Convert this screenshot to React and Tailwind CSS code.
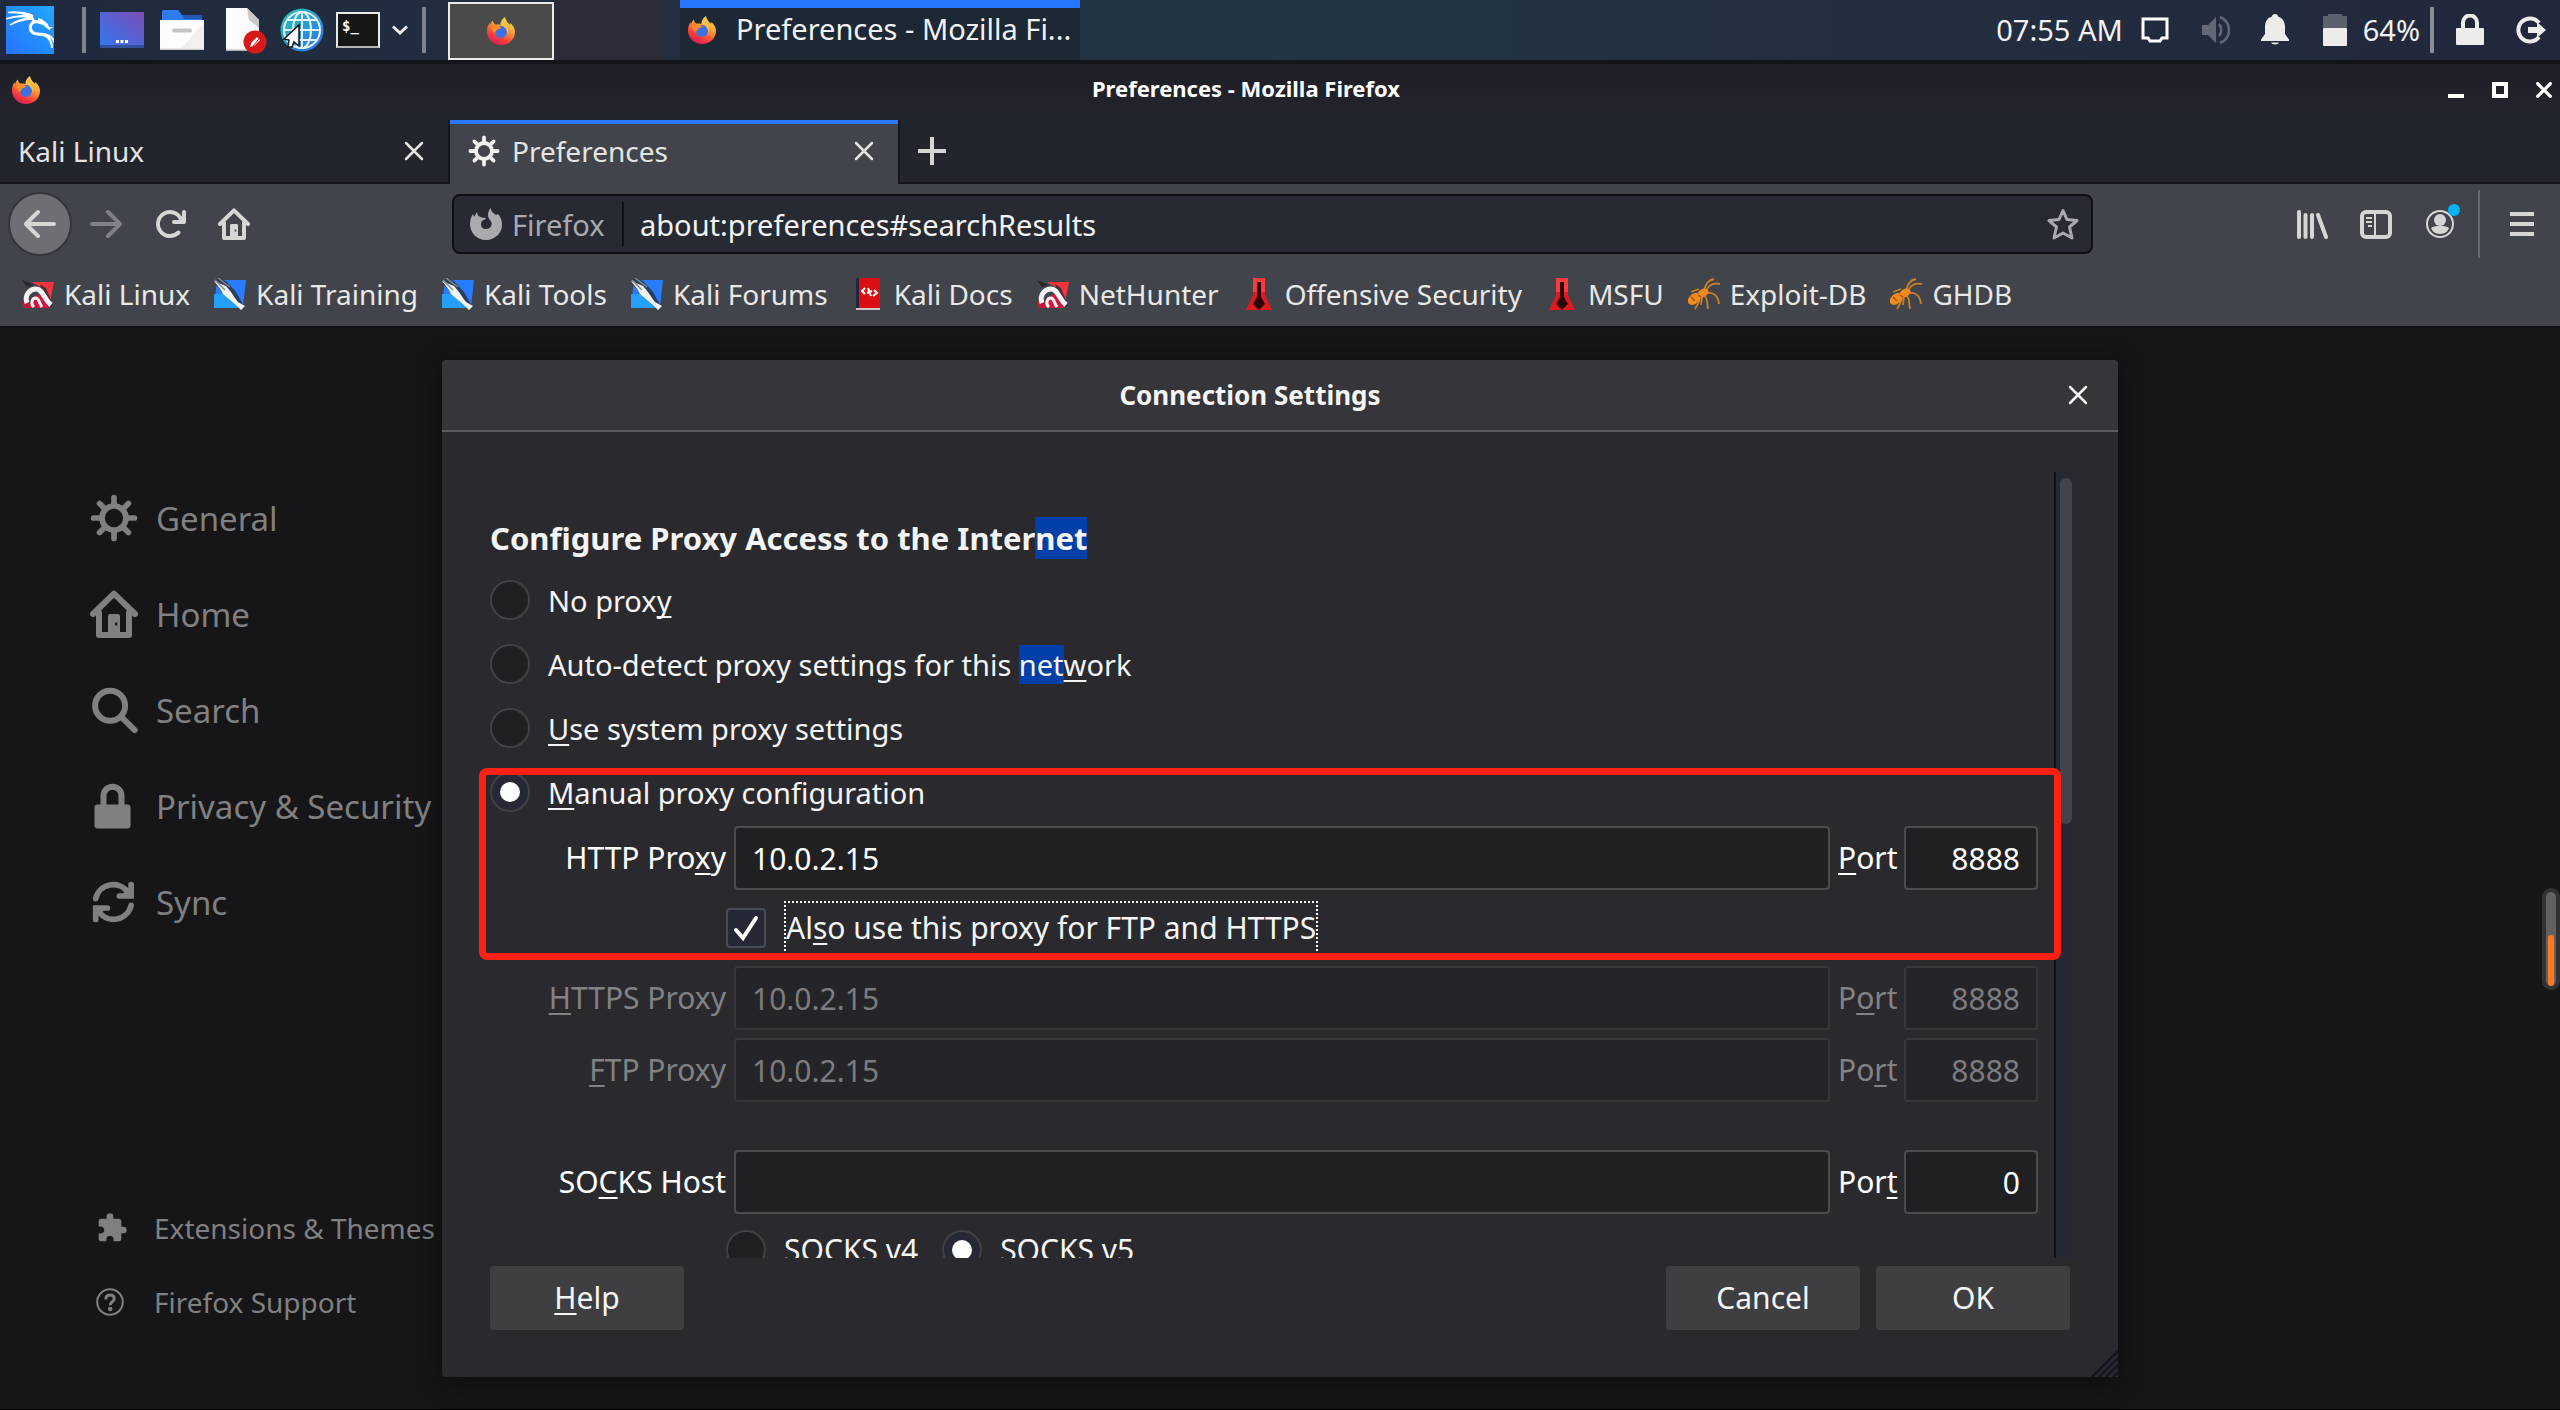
import React from "react";
import { SiKalilinux } from "react-icons/si";
import { MdExtension } from "react-icons/md";

/* ---------- icons ---------- */

function FirefoxLogo({ id }) {
  return (
    <svg viewBox="0 0 28 28" className="size-7 shrink-0" aria-hidden="true">
      <defs>
        <linearGradient id={id} x1="0.8" y1="0.05" x2="0.3" y2="1">
          <stop offset="0" stopColor="#f7e04d" />
          <stop offset="0.4" stopColor="#f79a33" />
          <stop offset="0.75" stopColor="#fa3b3b" />
          <stop offset="1" stopColor="#d81b5c" />
        </linearGradient>
      </defs>
      <path
        fill={`url(#${id})`}
        d="M14 28C6 28 0 22 0 14.500C0 11 1 8 2.500 6L3 8.500C3.500 6 4.800 4.500 6 3.600C6 5.500 7 7 8.500 7.600C10.500 7.600 12 7.500 13.300 8C13.500 5 14.500 2 18 0C18.500 3 20 4 21 6C22 6.500 22.500 7 23 8L23.500 6C26.500 9 28 12 28 15C28 22 22 28 14 28Z"
      />
      <circle cx="14" cy="15" r="6" fill="#3f6fe0" />
      <path fill="#fb8b2c" d="M4 10C7 8 11 8 14 10.500C13 12 11 12 10 12.500C9.500 14 8.500 15 8 16C6 15 4.500 13 4 10Z" />
      <path fill="#f7c04a" d="M14 8C18 9 21 13 20 17C21.500 15 21.500 11 19 8C17 6 16 4 17 2C14 4 13.500 6 14 8Z" />
    </svg>
  );
}

function FirefoxGlyph() {
  return (
    <svg viewBox="0 0 32 32" className="size-8 shrink-0" fill="#a9aaae" aria-hidden="true">
      <path d="M16 32C7 32 0 25 0 16C0 12 1 9 3 6L4 9L7 4C7 7 9 9 12 9.500L16 10C15 12 13 12 12 13C11 14 11.500 15 11 16C11 19 13 21 16 21C20 21 22 18 21.500 15C21 12 18 11 18 7C18 4 19 2 20.500 0C21 4 24 5 26 7L28 6C31 9 32 13 32 17C32 25 25 32 16 32Z" />
    </svg>
  );
}

function Gear({ className }) {
  return (
    <svg viewBox="0 0 16 16" className={className} fill="none" stroke="currentColor" strokeWidth="1.900" strokeLinecap="round" aria-hidden="true">
      <circle cx="8" cy="8" r="4" />
      <path d="M8 1.200V3.500M8 12.500V14.800M1.200 8H3.500M12.500 8H14.800M3.200 3.200L4.600 4.600M11.400 11.400L12.800 12.800M12.800 3.200L11.400 4.600M4.600 11.400L3.200 12.800" />
    </svg>
  );
}

function Home({ className }) {
  return (
    <svg viewBox="0 0 16 16" className={className} fill="none" stroke="currentColor" strokeWidth="2" strokeLinecap="round" strokeLinejoin="round" aria-hidden="true">
      <path d="M1 8L8 1.200L15 8M3 7.500V15H13V7.500" />
      <path fillRule="evenodd" stroke="none" fill="currentColor" d="M6.700 8H9.300A.700.700 0 0 1 10 8.700V15H6V8.700A.700.700 0 0 1 6.700 8ZM8.300 10.800V11.800H9.100V10.800Z" />
    </svg>
  );
}

function SearchIcon({ className }) {
  return (
    <svg viewBox="0 0 16 16" className={className} fill="none" stroke="currentColor" strokeWidth="2" strokeLinecap="round" aria-hidden="true">
      <circle cx="6.700" cy="6.600" r="5" />
      <path d="M10.500 10.400L14.900 14.700" />
    </svg>
  );
}

function LockIcon({ className }) {
  return (
    <svg viewBox="0 0 16 16" className={className} aria-hidden="true">
      <rect x="1.500" y="7.500" width="12" height="8" rx="1" fill="currentColor" />
      <path d="M4.500 8V4.600a3 3 0 0 1 6 0V8" fill="none" stroke="currentColor" strokeWidth="2" />
    </svg>
  );
}

function SyncIcon({ className }) {
  return (
    <svg viewBox="0 0 16 16" className={className} fill="none" stroke="currentColor" strokeWidth="1.900" strokeLinecap="round" aria-hidden="true">
      <path d="M1.900 6.900A6 6 0 0 1 12.600 4.700M13.700 9.100A6 6 0 0 1 3 11.300" />
      <path d="M14.400 1.800V6.400H9.700Z" fill="currentColor" stroke="none" />
      <path d="M13.700 2.200V6H9.800M1.900 13.800V10H5.800" />
      <path d="M1.200 14.200V9.600H5.900Z" fill="currentColor" stroke="none" />
    </svg>
  );
}

function HelpIcon({ className }) {
  return (
    <svg viewBox="0 0 28 28" className={className} fill="none" stroke="currentColor" strokeWidth="2" aria-hidden="true">
      <circle cx="14" cy="14" r="12.800" />
      <path strokeWidth="3" d="M9.800 11.500C9.800 8.500 11.600 7 14 7C16.500 7 18.200 8.500 18.200 10.700C18.200 13.500 14.200 14 14.200 17.200" />
      <circle cx="14.200" cy="21" r="1.300" fill="currentColor" />
    </svg>
  );
}

function Cross({ className, width = 2 }) {
  return (
    <svg viewBox="0 0 20 20" className={className} fill="none" stroke="currentColor" strokeWidth={width} strokeLinecap="round" aria-hidden="true">
      <path d="M2 2L18 18M18 2L2 18" />
    </svg>
  );
}

function KaliBlue() {
  return (
    <svg viewBox="0 0 32 32" className="size-8 shrink-0" aria-hidden="true">
      <path d="M3 2H32L29 29H0Z" fill="#2a7cff" />
      <path d="M0 16L15 16L29 30H0Z" fill="#24a0fb" />
      <path d="M4 0L12 3L22 14L31 30L20 22L9 14L1 6Z" fill="#2b2e33" opacity="0.800" />
      <path d="M0 3L12 8L17 14L21 20L24 24L31 28L27 32L22 27L16 22L9 16L7 12Z" fill="#f4f4f4" />
      <path d="M4 0L16 9M1 2L11 12" stroke="#8b8d90" strokeWidth="1.500" />
    </svg>
  );
}

function KaliRed() {
  return (
    <svg viewBox="0 0 32 32" className="size-8 shrink-0" aria-hidden="true">
      <path d="M10 4H32L28 24L20 10Z" fill="#f7333d" />
      <path d="M0 24L5 20L10 30H2Z" fill="#c81437" />
      <path d="M9 20L18 16L28 30H12Z" fill="#d5163c" />
      <path d="M0 2L12 7L5 9Z" fill="#24262b" />
      <path d="M18 6L24 10L31 27L28 30L23 22Z" fill="#2a2c31" opacity="0.800" />
      <path d="M5 25C2 17 8 11 14 11C21 11 21 20 29 27" fill="none" stroke="#f5f5f5" strokeWidth="5" />
      <path d="M12 29C8 26 10 20 14 20C17 20 17 25 20 29" fill="none" stroke="#f5f5f5" strokeWidth="3" />
    </svg>
  );
}

function DocsIcon() {
  return (
    <svg viewBox="0 0 32 32" className="size-8 shrink-0" aria-hidden="true">
      <rect x="4" y="0" width="24" height="30" fill="#d90f14" />
      <rect x="4" y="0" width="3" height="30" fill="#23243f" />
      <rect x="4" y="30" width="24" height="2" fill="#c9c9c9" />
      <path d="M13 10L10 13L13 16M22 12L25 15L21 18M15 15L20 13M16 10L19 18" stroke="#fff" strokeWidth="2" fill="none" />
    </svg>
  );
}

function TowerIcon() {
  return (
    <svg viewBox="0 0 32 32" className="size-8 shrink-0" aria-hidden="true">
      <path d="M10 0H22V17L29 32H3L10 17Z" fill="#e0191c" />
      <path d="M10 0H22V14H10Z" fill="#fb3b3b" />
      <path d="M14 4H18V19L22 26L16 32L10 26L14 19Z" fill="#2a0406" />
    </svg>
  );
}

function BugIcon() {
  return (
    <svg viewBox="0 0 32 32" className="size-8 shrink-0" aria-hidden="true">
      <g fill="none" stroke="#c8802a" strokeWidth="1.800">
        <path d="M16 12C18 6 20 2 26 1M19 11C22 6 26 5 32 6M20 15C26 14 30 18 31 26M17 18C20 22 19 27 20 31M12 19C12 24 9 27 7 31M11 11L3 14M14 19L13 27" />
      </g>
      <ellipse cx="6" cy="21" rx="7" ry="5" transform="rotate(-40 6 21)" fill="#f08a1d" />
      <ellipse cx="15" cy="15" rx="6" ry="4" transform="rotate(-30 15 15)" fill="#f08a1d" />
      <path d="M3 19L7 23M10 17L13 19" stroke="#a45408" strokeWidth="1.500" />
    </svg>
  );
}

/* ---------- desktop panel ---------- */

function Launchers() {
  return (
    <>
      <button aria-label="Applications" className="ml-1.5 size-12 bg-linear-to-tr from-[#2673ff] to-[#26a5ff]">
        <SiKalilinux className="size-12 text-white" stroke="#fff" strokeWidth="0.8" />
      </button>
      <div className="ml-7 h-[46px] w-1 bg-[#7e838d]" />
      <div className="ml-3.5 flex items-center gap-4">
        <button aria-label="Show desktop" className="block">
          <svg viewBox="0 0 44 36" className="h-9 w-11">
            <defs>
              <linearGradient id="desk" x1="0" y1="1" x2="1" y2="0">
                <stop offset="0" stopColor="#2f7bf0" />
                <stop offset="1" stopColor="#7c4bb8" />
              </linearGradient>
            </defs>
            <rect width="44" height="36" fill="url(#desk)" />
            <rect y="33" width="44" height="3" fill="#32509e" />
            <path d="M16 28h3v3h-3zM20.500 28h3v3h-3zM25 28h3v3h-3z" fill="#fff" />
          </svg>
        </button>
        <button aria-label="Files" className="block">
          <svg viewBox="0 0 44 40" className="h-10 w-11">
            <path d="M2 2a2 2 0 0 1 2-2H18L22 5H42V14H2Z" fill="#2f7bf0" />
            <path d="M22 5H42V9H24Z" fill="#2358b8" />
            <rect y="10" width="44" height="30" fill="#fdfdfd" />
            <path d="M44 12V38H22Z" fill="#f0f0f0" />
            <rect y="38.500" width="44" height="1.500" fill="#cfcfcf" />
            <rect x="12" y="18.500" width="20" height="4" rx="2" fill="#c4c4c4" />
          </svg>
        </button>
        <button aria-label="Text editor" className="block">
          <svg viewBox="0 0 48 48" className="size-12">
            <path d="M6 2H27L39 14V45H6Z" fill="#fbfbfb" />
            <path d="M27 2L39 14V22L29 14Z" fill="#c9c9c9" />
            <rect x="6" y="43.500" width="33" height="1.500" fill="#b5b5b5" />
            <circle cx="35" cy="36" r="11.500" fill="#d61a1a" />
            <path d="M30 41L31.500 36.500L37 31L40 34L34.500 39.500Z" fill="#fff" />
            <path d="M33 40L39 33" stroke="#d61a1a" strokeWidth="1" />
          </svg>
        </button>
      </div>
      <div className="ml-3 flex items-center gap-3">
        <button aria-label="Web browser" className="block">
          <svg viewBox="0 0 44 44" className="size-11">
            <defs>
              <linearGradient id="globe" x1="0" y1="0" x2="1" y2="1">
                <stop offset="0" stopColor="#25c6b8" />
                <stop offset="1" stopColor="#2e6fea" />
              </linearGradient>
            </defs>
            <circle cx="22" cy="22" r="21.500" fill="url(#globe)" />
            <g fill="none" stroke="#e2f3f8" strokeWidth="2">
              <circle cx="22" cy="22" r="18" />
              <ellipse cx="22" cy="22" rx="9" ry="18" />
              <path d="M22 4V40M4 22H40M7 12H37M7 32H37" />
            </g>
            <path d="M19 17V38L14 34L12 39L8 39L9 32L4 31Z" fill="#fff" stroke="#111" strokeWidth="1.500" />
          </svg>
        </button>
        <button aria-label="Terminal" className="flex h-9 w-11 items-start border-2 border-[#e9e9e9] border-b-[#b5b5b5] bg-[#161616] pl-1 pt-1 font-['DejaVu_Sans_Mono',monospace] text-sm font-bold leading-4 text-white">
          $_
        </button>
        <button aria-label="More terminals" className="block">
          <svg viewBox="0 0 16 10" className="h-2.5 w-4" fill="none" stroke="#f0f0f0" strokeWidth="3">
            <path d="M1 1.500L8 8L15 1.500" />
          </svg>
        </button>
      </div>
      <div className="ml-3.5 h-[46px] w-1 bg-[#7e838d]" />
    </>
  );
}

function Tray() {
  return (
    <div className="ml-auto flex items-center pr-3.5 text-[29px] leading-none">
      <time className="mr-4 pb-0.5">07:55 AM</time>
      <div className="mr-3 flex items-center gap-7 text-[#ececea]">
        <svg viewBox="0 0 32 32" className="size-8">
          <path d="M4 5H28V24H23L21 27H11L9 24H4Z" fill="none" stroke="#fff" strokeWidth="3" />
        </svg>
        <svg viewBox="0 0 32 32" className="size-8 text-[#626875]">
          <path d="M3 11H9L17 3V29L9 21H3Z" fill="currentColor" />
          <path d="M20 10C23 13 23 19 20 22M21 3C33 8 33 24 21 29" fill="none" stroke="currentColor" strokeWidth="2.500" />
        </svg>
        <svg viewBox="0 0 32 32" className="size-8" fill="currentColor">
          <path d="M16 0C18 0 19 1 19 2.500C24 4 26 8 26 13V20L30 25.500V27H2V25.500L6 20V13C6 8 8 4 13 2.500C13 1 14 0 16 0ZM12 28.500H20C19 31 13 31 12 28.500Z" />
        </svg>
        <svg viewBox="0 0 32 32" className="size-8">
          <path d="M9 0H23V2H28V14H4V2H9Z" fill="#5c616e" />
          <rect x="4" y="14" width="24" height="18" rx="1" fill="#ececea" />
        </svg>
      </div>
      <span className="mr-2.5 pb-0.5">64%</span>
      <div className="mr-5 h-[46px] w-1 bg-[#8a8d96]" />
      <div className="flex items-center gap-7">
        <button aria-label="Lock screen" className="block text-[#ececea]">
          <svg viewBox="0 0 32 32" className="size-8">
            <rect x="2" y="14" width="28" height="17" rx="1" fill="currentColor" />
            <path d="M9 15V8.500a7 7 0 0 1 14 0V15" fill="none" stroke="currentColor" strokeWidth="4" />
          </svg>
        </button>
        <button aria-label="Log out" className="block text-[#ececea]">
          <svg viewBox="0 0 32 32" className="size-8">
            <path d="M25 9A11.500 11.500 0 1 0 25 23" fill="none" stroke="currentColor" strokeWidth="4" />
            <path d="M14 13H23V8L32 16L23 24V19H14Z" fill="currentColor" />
          </svg>
        </button>
      </div>
    </div>
  );
}

function Panel() {
  return (
    <header className="flex h-16 shrink-0 items-center border-b-4 border-[#131518] bg-linear-to-r from-[#20293d] via-[#223545] to-[#22273b] text-[#f2f2f2]">
      <Launchers />
      <button aria-label="Workspace 1" className="ml-[22px] mt-0.5 grid h-[58px] w-[106px] place-items-center border-2 border-[#ececea] bg-[#4a4a4b]">
        <FirefoxLogo id="fx-workspace" />
      </button>
      <div className="h-full w-[110px] bg-[#2c2c38]" />
      <button className="ml-4 flex h-full w-[400px] items-center gap-5 border-t-8 border-[#2777ff] bg-[#1c2834] px-2 pb-2 text-left text-[29px] leading-none">
        <FirefoxLogo id="fx-task" />
        <span className="pb-1">Preferences - Mozilla Fi...</span>
      </button>
      <Tray />
    </header>
  );
}

/* ---------- browser chrome ---------- */

function TitleBar() {
  return (
    <div className="flex h-14 shrink-0 items-center bg-linear-to-b from-[#1e1e26] to-[#23252d] px-2">
      <div className="w-9 pb-1 pl-1">
        <FirefoxLogo id="fx-title" />
      </div>
      <h1 className="flex-1 pb-2 text-center text-[22px] font-bold leading-none">Preferences - Mozilla Firefox</h1>
      <div className="flex gap-7 pb-1">
        <button aria-label="Minimize" className="flex size-4 items-end">
          <span className="h-1 w-4 bg-white" />
        </button>
        <button aria-label="Maximize" className="size-4 border-4 border-white" />
        <button aria-label="Close window" className="size-4">
          <Cross className="size-4" width={4} />
        </button>
      </div>
    </div>
  );
}

function Tabs() {
  return (
    <nav aria-label="Tabs" className="flex h-16 shrink-0 bg-[#23252d] text-[28px] leading-none text-[#e4e4e2]">
      <div className="flex w-[448px] items-center justify-between border-b-2 border-[#15161b] pl-[18px] pr-6">
        <button>Kali Linux</button>
        <button aria-label="Close Kali Linux tab"><Cross className="size-5" width={2.5} /></button>
      </div>
      <div className="flex w-[452px] items-center border-x-2 border-[#15161b] border-t-0 bg-[#42444b]">
        <div className="flex h-full flex-1 items-center border-t-4 border-[#2777ff] pb-1.5 pl-[18px] pr-6">
          <Gear className="size-8 text-[#f0f0ee]" />
          <button className="ml-3 flex-1 text-left">Preferences</button>
          <button aria-label="Close Preferences tab"><Cross className="size-5" width={2.5} /></button>
        </div>
      </div>
      <div className="flex flex-1 items-center border-b-2 border-[#15161b] pl-[18px]">
        <button aria-label="New tab">
          <svg viewBox="0 0 28 28" className="size-7" stroke="#d6d6d4" strokeWidth="4"><path d="M14 0V28M0 14H28" /></svg>
        </button>
      </div>
    </nav>
  );
}

function NavBar() {
  return (
    <div className="flex h-20 shrink-0 items-center bg-[#42444b] pl-2 pr-[26px] text-[#d6d6d4]">
      <div className="flex w-[444px] items-center">
        <button aria-label="Back" className="grid size-16 place-items-center rounded-full border-2 border-[#33353a] bg-[#6d6f74]">
          <svg viewBox="0 0 16 16" className="size-8" fill="currentColor">
            <path d="M15 7H3.414l4.293-4.293a1 1 0 0 0-1.414-1.414l-6 6a1 1 0 0 0 0 1.414l6 6a1 1 0 0 0 1.414-1.414L3.414 9H15a1 1 0 0 0 0-2z" />
          </svg>
        </button>
        <button aria-label="Forward" className="ml-[18px] text-[#7f8186]">
          <svg viewBox="0 0 16 16" className="size-8" fill="currentColor">
            <path d="M1 7h11.586L8.293 2.707a1 1 0 0 1 1.414-1.414l6 6a1 1 0 0 1 0 1.414l-6 6a1 1 0 0 1-1.414-1.414L12.586 9H1a1 1 0 0 1 0-2z" />
          </svg>
        </button>
        <button aria-label="Reload" className="ml-8">
          <svg viewBox="0 0 16 16" className="size-8" fill="currentColor">
            <path d="M15 1a1 1 0 0 0-1 1v2.418A6.995 6.995 0 1 0 8 15a6.954 6.954 0 0 0 4.950-2.050 1 1 0 0 0-1.414-1.414A5.019 5.019 0 1 1 12.549 6H10a1 1 0 0 0 0 2h5a1 1 0 0 0 1-1V2a1 1 0 0 0-1-1z" />
          </svg>
        </button>
        <button aria-label="Home" className="ml-8"><Home className="size-8" /></button>
      </div>
      <div className="flex h-[60px] flex-1 items-center rounded-lg border-2 border-[#0e0f13] bg-[#272933] pl-4 pr-3 text-[29px] leading-none">
        <FirefoxGlyph />
        <span className="ml-2.5 w-[110px] text-[#a9aaae]">Firefox</span>
        <span className="h-11 w-0.5 bg-[#0e0f13]" />
        <input aria-label="Address" defaultValue="about:preferences#searchResults" className="ml-4 h-14 min-w-0 flex-1 bg-transparent text-[#f4f4f4] outline-none" />
        <button aria-label="Bookmark this page" className="text-[#a9aaae]">
          <svg viewBox="0 0 32 32" className="size-8" fill="none" stroke="currentColor" strokeWidth="3" strokeLinejoin="round">
            <path d="M16 2.500L20 11.500L30 12.500L22.500 19L25 30L16 25L7 30L9.500 19L2 12.500L12 11.500Z" />
          </svg>
        </button>
      </div>
      <div className="ml-[203px] flex items-center">
        <button aria-label="Library">
          <svg viewBox="0 0 32 32" className="size-8" stroke="currentColor" fill="none" strokeLinecap="round">
            <path strokeWidth="4" d="M3 4V29M9.500 7V29M16 7V29M22 7L30 29" />
          </svg>
        </button>
        <button aria-label="Sidebar" className="ml-8">
          <svg viewBox="0 0 32 32" className="size-8" fill="none" stroke="currentColor">
            <rect x="2" y="4" width="28" height="25" rx="4" strokeWidth="4" />
            <path strokeWidth="2" d="M15 4V28M6 10H12M6 14H12M8 18H12" />
          </svg>
        </button>
        <button aria-label="Account" className="relative ml-8">
          <svg viewBox="0 0 32 32" className="size-8" fill="none" stroke="currentColor">
            <circle cx="16" cy="16" r="13" strokeWidth="2" />
            <circle cx="16" cy="12" r="6" fill="currentColor" stroke="none" />
            <path d="M7 20C11 17 21 17 25 20C24 23 21 26 16 26C11 26 8 23 7 20Z" fill="currentColor" stroke="none" />
          </svg>
          <span className="absolute -right-1 -top-1 size-3 rounded-full bg-[#00b3ff]" />
        </button>
        <span className="ml-[22px] h-[68px] w-0.5 bg-[#67696e]" />
        <button aria-label="Menu" className="ml-[30px]">
          <svg viewBox="0 0 24 24" className="size-6" stroke="currentColor" strokeWidth="4"><path d="M0 2H24M0 12H24M0 22H24" /></svg>
        </button>
      </div>
    </div>
  );
}

const bookmarks = [
  ["Kali Linux", KaliRed],
  ["Kali Training", KaliBlue],
  ["Kali Tools", KaliBlue],
  ["Kali Forums", KaliBlue],
  ["Kali Docs", DocsIcon],
  ["NetHunter", KaliRed],
  ["Offensive Security", TowerIcon],
  ["MSFU", TowerIcon],
  ["Exploit-DB", BugIcon],
  ["GHDB", BugIcon],
];

function Bookmarks() {
  return (
    <nav aria-label="Bookmarks" className="flex h-16 shrink-0 items-center gap-6 border-b-2 border-[#101115] bg-[#42444b] pb-0.5 pl-[22px] text-[28px] leading-none text-[#e8e8e6]">
      {bookmarks.map(([name, Icon]) => (
        <a key={name} href="#" className="flex items-center gap-2.5 whitespace-nowrap">
          <Icon />
          {name}
        </a>
      ))}
    </nav>
  );
}

/* ---------- preferences page ---------- */

const categories = [
  ["General", Gear],
  ["Home", Home],
  ["Search", SearchIcon],
  ["Privacy & Security", LockIcon],
  ["Sync", SyncIcon],
];

function Sidebar() {
  return (
    <aside className="flex w-[442px] shrink-0 flex-col justify-between overflow-hidden pb-[70px] pt-[142px] text-[#808081]">
      <nav aria-label="Categories">
        {categories.map(([name, Icon]) => (
          <a key={name} href="#" className="flex h-24 items-center gap-[18px] whitespace-nowrap pl-[90px] text-[33px] leading-none">
            <Icon className="size-12 shrink-0" />
            {name}
          </a>
        ))}
      </nav>
      <nav aria-label="More">
        <a href="#" className="flex h-[74px] items-center gap-[26px] whitespace-nowrap pl-24 text-[28px] leading-none">
          <MdExtension className="size-8 shrink-0" />
          Extensions &amp; Themes
        </a>
        <a href="#" className="flex h-[74px] items-center gap-[30px] whitespace-nowrap pl-24 text-[28px] leading-none">
          <HelpIcon className="size-7 shrink-0" />
          Firefox Support
        </a>
      </nav>
    </aside>
  );
}

function Key({ children }) {
  return <span className="underline decoration-2 underline-offset-4 [text-decoration-skip-ink:none]">{children}</span>;
}

function Radio({ name, checked, children, className = "h-16" }) {
  return (
    <label className={`flex items-center gap-[18px] whitespace-nowrap ${className}`}>
      <input
        type="radio"
        name={name}
        defaultChecked={checked}
        className="grid size-10 shrink-0 appearance-none place-content-center rounded-full border-2 border-[#414145] bg-[#202022] before:size-5 before:rounded-full checked:bg-[#262935] checked:before:bg-white"
      />
      <span>{children}</span>
    </label>
  );
}

const fieldStyle =
  "h-16 rounded border-2 border-[#4c4c4f] bg-[#202022] px-4 outline-none disabled:border-[#37373a] disabled:bg-[#252429] disabled:text-[#7c7c7e]";

function ProxyRow({ id, label, portLabel, host, port, disabled }) {
  const tone = disabled ? "text-[#828284]" : "text-white";
  return (
    <div className={`flex items-center text-[30px] ${tone}`}>
      <label htmlFor={id} className="mr-2 w-[236px] whitespace-nowrap text-right">{label}</label>
      <input id={id} defaultValue={host} disabled={disabled} className={`${fieldStyle} min-w-0 flex-1`} />
      <label htmlFor={`${id}-port`} className="ml-2 w-[66px]">{portLabel}</label>
      <input id={`${id}-port`} defaultValue={port} disabled={disabled} className={`${fieldStyle} w-[134px] text-right`} />
    </div>
  );
}

function DialogButton({ children }) {
  return <button className="h-16 w-[194px] rounded bg-[#3f3f41] text-center">{children}</button>;
}

function ConnectionDialog() {
  return (
    <section role="dialog" aria-labelledby="dialog-title" className="relative mb-8 mt-8 flex min-w-0 flex-1 flex-col rounded bg-[#2a2a2e] text-[29px] leading-none text-[#f5f5f5] shadow-[0_4px_24px_rgba(0,0,0,0.5)]">
      <div className="flex h-[72px] shrink-0 items-center rounded-t border-b-2 border-[#5c5b5f] bg-[#363539] pr-[30px]">
        <h2 id="dialog-title" className="flex-1 pr-2.5 text-center text-[26px] font-bold">Connection Settings</h2>
        <button aria-label="Close dialog"><Cross className="size-5" width={2.5} /></button>
      </div>

      <div className="ml-12 mr-10 mt-10 flex min-h-0 flex-1">
        <div className="min-w-0 flex-1 overflow-y-clip pr-4">
          <h3 className="mb-2 pt-11 text-[31px] font-bold leading-[44px]">
            Configure Proxy Access to the Inter<span className="bg-[#003eaa]">net</span>
          </h3>
          <Radio name="mode">No prox<Key>y</Key></Radio>
          <Radio name="mode">
            Auto-detect proxy settings for this <span className="bg-[#003eaa]">net</span><Key>w</Key>ork
          </Radio>
          <Radio name="mode"><Key>U</Key>se system proxy settings</Radio>
          <div className="relative">
            <Radio name="mode" checked className="mb-0.5 h-16"><Key>M</Key>anual proxy configuration</Radio>
            <ProxyRow id="http" label={<>HTTP Pro<Key>x</Key>y</>} portLabel={<><Key>P</Key>ort</>} host="10.0.2.15" port="8888" />
            <label className="ml-[236px] flex h-[76px] items-center text-[30px]">
              <span className="relative block size-10">
                <input type="checkbox" defaultChecked className="block size-10 appearance-none rounded-sm border-2 border-[#4a4c54] bg-[#262935]" />
                <svg viewBox="0 0 40 40" className="pointer-events-none absolute inset-0 size-10" fill="none" stroke="#fff" strokeWidth="4" strokeLinecap="round">
                  <path d="M10 22L17 30L30 10" />
                </svg>
              </span>
              <span className="ml-[18px] flex h-[54px] items-center whitespace-nowrap border-2 border-dotted border-white">
                <span>Al<Key>s</Key>o use this proxy for FTP and HTTPS</span>
              </span>
            </label>
            <div className="pointer-events-none absolute -left-[11px] -right-[23px] bottom-1.5 top-2 z-10 rounded-lg border-[7px] border-[#fe2012]" />
          </div>
          <div className="flex flex-col gap-2">
            <ProxyRow id="https" label={<><Key>H</Key>TTPS Proxy</>} portLabel={<>P<Key>o</Key>rt</>} host="10.0.2.15" port="8888" disabled />
            <ProxyRow id="ftp" label={<><Key>F</Key>TP Proxy</>} portLabel={<>Po<Key>r</Key>t</>} host="10.0.2.15" port="8888" disabled />
          </div>
          <div className="mt-12">
            <ProxyRow id="socks" label={<>SO<Key>C</Key>KS Host</>} portLabel={<>Por<Key>t</Key></>} host="" port="0" />
          </div>
          <div className="ml-[236px] flex gap-6 text-[30px]">
            <Radio name="socks" className="h-[72px]">SOC<Key>K</Key>S v4</Radio>
            <Radio name="socks" checked className="h-[72px]">SOCKS <Key>v</Key>5</Radio>
          </div>
        </div>
        <div className="w-6 border-l-2 border-[#0f1014] bg-[#262833] px-1 pt-1.5">
          <div className="h-[346px] w-3 rounded-full bg-[#42444b]" />
        </div>
      </div>

      <div className="mb-[47px] mt-2 flex gap-4 px-12 text-[30px]">
        <DialogButton><Key>H</Key>elp</DialogButton>
        <span className="flex-1" />
        <DialogButton>Cancel</DialogButton>
        <DialogButton>OK</DialogButton>
      </div>

      <svg viewBox="0 0 30 30" className="absolute bottom-0 right-0 size-[30px]" aria-hidden="true">
        <path d="M0 30L30 0V30Z" fill="#262833" />
        <path d="M4 30L30 4M11 30L30 11M18 30L30 18M25 30L30 25" stroke="#14151a" strokeWidth="2" />
      </svg>
    </section>
  );
}

export default function App() {
  return (
    <div className="flex h-screen flex-col overflow-hidden bg-[#161618] font-['Noto_Sans','Open_Sans',sans-serif] text-white">
      <Panel />
      <TitleBar />
      <Tabs />
      <NavBar />
      <Bookmarks />
      <main className="flex min-h-0 flex-1 border-b border-black">
        <Sidebar />
        <ConnectionDialog />
        <div className="flex w-[442px] shrink-0 justify-end">
          <div className="mt-[560px] flex h-[102px] w-[18px] justify-center rounded-full bg-[#323232] py-1">
            <div className="flex w-2.5 items-end justify-center rounded-full bg-[#616161]">
              <div className="h-[51px] w-1.5 rounded-full bg-[#ff7722]" />
            </div>
          </div>
        </div>
      </main>
    </div>
  );
}
